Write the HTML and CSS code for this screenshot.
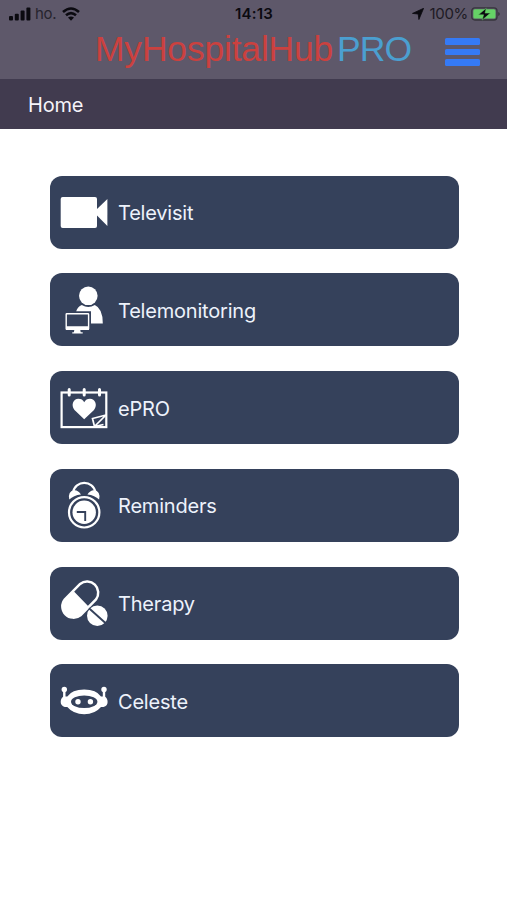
FILE: index.html
```html
<!DOCTYPE html>
<html lang="en">
<head>
<meta charset="UTF-8">
<meta name="viewport" content="width=device-width, initial-scale=1.0">
<title>MyHospitalHub PRO</title>
<link rel="stylesheet" href="styles.css">
</head>
<body>
<header class="header">
    <div class="status">
        <div class="status-left">
            <svg class="signal" width="22" height="14" viewBox="0 0 22 14">
                <rect x="0" y="9" width="4" height="4.5" rx="1"/>
                <rect x="5.8" y="6.7" width="4" height="6.8" rx="1"/>
                <rect x="11.6" y="3.6" width="4" height="9.9" rx="1"/>
                <rect x="17.4" y="0.6" width="4" height="12.9" rx="1"/>
            </svg>
            <span class="carrier">ho.</span>
            <svg class="wifi" width="18" height="14" viewBox="0 0 18 14">
                <path d="M1 5Q9-2 17 5M4 8.3Q9 4 14 8.3" fill="none" stroke="#0b0a10" stroke-width="2.6"/>
                <path d="M6 10.6Q9 8.2 12 10.6L9 13.8z"/>
            </svg>
        </div>
        <span class="time">14:13</span>
        <div class="status-right">
            <svg width="12" height="12" viewBox="0 0 12 12"><path d="M11.6 0.3L6.9 11.5L6.2 6L0.5 5.4z" stroke="#0b0a10" stroke-width=".8"/></svg>
            <span class="percent">100%</span>
            <svg class="battery" width="29" height="14" viewBox="0 0 29 14">
                <rect x="0.8" y="0.8" width="25.2" height="12.2" rx="3" fill="none" stroke="#37353d" stroke-width="1.3"/>
                <rect x="2.3" y="2.3" width="22.2" height="9.2" rx="1.6" fill="#65d266"/>
                <path d="M27.2 5v4q1.6-.5 1.6-2t-1.6-2z" fill="#37353d"/>
                <path d="M15.2 1.2L7.4 7.8h5.2L11.2 13l8.2-6.9h-5.3z" stroke="#65d266" stroke-width=".5"/>
            </svg>
        </div>
    </div>
    <div class="brand">
        <div class="logo"><span class="logo-name">MyHospitalHub</span><span class="logo-pro">PRO</span></div>
        <div class="burger"><i></i><i></i><i></i></div>
    </div>
</header>
<div class="title">Home</div>
<main class="menu">
    <div class="item">
        <svg class="icon" viewBox="0 0 48 48">
            <rect x="0.7" y="9" width="36.3" height="31" rx="2"/>
            <path d="M36.5 21.5L47.4 11v27L36.5 27z"/>
        </svg>
        <span>Televisit</span>
    </div>
    <div class="item">
        <svg class="icon" viewBox="0 0 48 48">
            <circle cx="28.3" cy="9.8" r="9.3"/>
            <path d="M16.2 25.2Q17.5 21 21.8 19.1Q28.3 23.1 34.8 19.1Q42.8 22.5 42.8 37.5H31V25.2z"/>
            <rect x="6.2" y="27.8" width="22.4" height="15.4" rx=".5" fill="none" stroke="#fff" stroke-width="1.4"/>
            <path d="M6 40.3h23V44H6zM14.3 44h6l.4 2.2h2v1.3H12.3v-1.3h1.6z"/>
        </svg>
        <span>Telemonitoring</span>
    </div>
    <div class="item">
        <svg class="icon" viewBox="0 0 48 48">
            <rect x="1.6" y="8.5" width="44.7" height="34.6" fill="none" stroke="#fff" stroke-width="2.2"/>
            <path d="M9.2 5.5v5.5M24.2 5.5v5.5M39.5 5.5v5.5" stroke="#fff" stroke-width="3" stroke-linecap="round"/>
            <path d="M24.2 35.2L14.5 26C10.5 21 13.5 14.8 18.3 14.8Q22.5 14.8 24.2 18.2Q26 14.8 30 14.8C35 14.8 38 21 34 26z"/>
            <path d="M46 31L32.5 34.5L34.5 42.5M46 31L34.5 42.5L43.5 40.5" fill="none" stroke="#fff" stroke-width="1.7"/>
        </svg>
        <span>ePRO</span>
    </div>
    <div class="item">
        <svg class="icon" viewBox="0 0 48 48">
            <path d="M13 11.5C15 -1.3 33.5 -1.3 35.5 11.5" fill="none" stroke="#fff" stroke-width="2.2"/>
            <path d="M9.3 18.5Q7.5 10 14.5 9.3Q18.5 9.5 21 13.4Q13.5 14.2 9.3 18.5zM39.1 18.5Q40.9 10 33.9 9.3Q29.9 9.5 27.4 13.4Q34.9 14.2 39.1 18.5z"/>
            <circle cx="24.2" cy="31.3" r="15.2" fill="none" stroke="#fff" stroke-width="2.2"/>
            <circle cx="24.2" cy="31.3" r="11.7"/>
            <path d="M16.8 31h8.4v9" fill="none" stroke="#35415b" stroke-width="1.9"/>
        </svg>
        <span>Reminders</span>
    </div>
    <div class="item">
        <svg class="icon" viewBox="0 0 48 48">
            <path d="M4.9 20.3L20.1 4.9A11.2 11.2 0 0 1 36 20.4L20.5 36.2A11.2 11.2 0 0 1 4.9 20.3z" fill="none" stroke="#fff" stroke-width="2.5"/>
            <path d="M14 12.5L28.3 27.2L20.5 36.2A11.2 11.2 0 0 1 4.9 20.3z"/>
            <circle cx="37.3" cy="36.7" r="10.3"/>
            <path d="M29 29.2L46 44.5" stroke="#35415b" stroke-width="1.9"/>
        </svg>
        <span>Therapy</span>
    </div>
    <div class="item">
        <svg class="icon" viewBox="0 0 48 48">
            <path d="M4.3 12v12M44 12v12" stroke="#fff" stroke-width="2.4"/>
            <circle cx="4.3" cy="12.5" r="2.7"/>
            <circle cx="44" cy="12.5" r="2.7"/>
            <path d="M.7 25Q.7 21 3.5 19.5H7.3Q12 12.5 24.2 12.5T41 19.5H44.8Q47.6 21 47.6 25T43.5 30H41Q35 37.2 24.2 37.2T7.3 30H4.8Q.7 28.5.7 25z"/>
            <ellipse cx="24.2" cy="24.8" rx="13.2" ry="6.3" fill="#35415b"/>
            <circle cx="18" cy="24.8" r="2.7"/>
            <circle cx="30.4" cy="24.8" r="2.7"/>
        </svg>
        <span>Celeste</span>
    </div>
</main>
</body>
</html>
```
FILE: styles.css
```css
body {
    margin: 0;
    min-height: 900px;
    background: #fff;
    font-family: Inter, "Liberation Sans", sans-serif;
}
svg {
    display: block;
    flex-shrink: 0;
}
.header {
    height: 79px;
    background: #5e586a;
    color: #0b0a10;
}
.status {
    display: grid;
    grid-template-columns: 1fr auto 1fr;
    align-items: center;
    height: 27px;
    padding: 0 7px 0 8px;
    font-size: 15px;
    line-height: 27px;
}
.status svg {
    fill: #0b0a10;
}
.status-left, .status-right {
    display: flex;
    align-items: center;
}
.status-left {
    padding-left: 1px;
}
.status-right {
    justify-content: flex-end;
}
.carrier {
    margin: 0 6px 0 4px;
    color: #27242e;
    letter-spacing: -0.3px;
}
.time {
    font-weight: 600;
    letter-spacing: 0.2px;
}
.percent {
    margin: 0 3px 0 5px;
    color: #1d1a24;
    letter-spacing: -0.3px;
}
.brand {
    display: flex;
    justify-content: space-between;
    height: 52px;
    padding: 0 27px 0 95px;
}
.logo {
    display: flex;
    gap: 4px;
    font-family: "Liberation Sans", Arial, sans-serif;
    font-size: 35.5px;
    line-height: 45px;
    letter-spacing: -0.2px;
    white-space: nowrap;
}
.logo-name {
    color: #cb413f;
}
.logo-pro {
    color: #4b9fd0;
    letter-spacing: -1px;
}
.burger {
    display: flex;
    flex-direction: column;
    gap: 4px;
    width: 35px;
    padding-top: 11px;
}
.burger i {
    height: 6.5px;
    border-radius: 1.5px;
    background: #357af6;
}
.title {
    height: 50px;
    padding-left: 28px;
    background: #413b4f;
    color: #f5f3fa;
    font-size: 20px;
    line-height: 52px;
    letter-spacing: -0.2px;
}
.menu {
    display: flex;
    flex-direction: column;
    gap: 24.7px;
    padding: 46.8px 48px 0 49.5px;
}
.item {
    display: flex;
    align-items: center;
    gap: 10.5px;
    height: 73px;
    padding-left: 10px;
    border-radius: 12px;
    background: #35415b;
    color: #edf2fb;
    font-size: 20px;
    letter-spacing: -0.2px;
}
.item span {
    padding-top: 2px;
}
.icon {
    width: 48px;
    height: 48px;
    fill: #fff;
}
```
